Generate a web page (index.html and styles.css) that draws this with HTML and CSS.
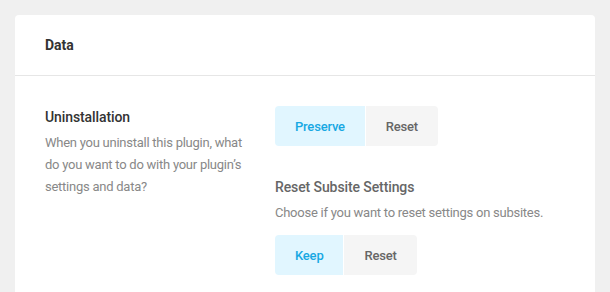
FILE: index.html
```html
<!DOCTYPE html>
<html lang="en">
<head>
<meta charset="utf-8">
<title>Data</title>
<link rel="stylesheet" href="styles.css">
</head>
<body>
<div class="card">
  <div class="card-header">
    <h3 class="card-title">Data</h3>
  </div>
  <div class="card-body">
    <div class="setting-row">
      <div class="setting-label">
        <h4 class="label-title">Uninstallation</h4>
        <p class="label-desc">When you uninstall this plugin, what do you want to do with your plugin’s settings and data?</p>
      </div>
      <div class="setting-field">
        <div class="tabs">
          <span class="tab active">Preserve</span>
          <span class="tab">Reset</span>
        </div>
        <div class="sub-setting">
          <h4 class="sub-title">Reset Subsite Settings</h4>
          <p class="sub-desc">Choose if you want to reset settings on subsites.</p>
          <div class="tabs">
            <span class="tab active">Keep</span>
            <span class="tab">Reset</span>
          </div>
        </div>
      </div>
    </div>
  </div>
</div>
</body>
</html>
```
FILE: styles.css
```css
* { box-sizing: border-box; }
html, body { height: 100%; }
body {
  margin: 0;
  padding: 15px;
  background: #f0f0f0;
  font-family: Roboto, "Liberation Sans", sans-serif;
  color: #333;
}
.card {
  width: 580px;
  min-height: 400px;
  background: #fff;
  border-radius: 4px;
}
.card-header {
  height: 61px;
  padding: 0 30px;
  display: flex;
  align-items: center;
  border-bottom: 1px solid #e6e6e6;
}
.card-title {
  margin: 0;
  font-size: 14px;
  font-weight: 700;
  line-height: 22px;
  color: #333;
  padding-bottom: 1px;
}
.card-body {
  padding: 30px;
}
.setting-row {
  display: flex;
  gap: 30px;
}
.setting-label {
  width: 200px;
  flex: none;
}
.label-title, .sub-title {
  margin: 0;
  font-size: 14px;
  font-weight: 500;
  line-height: 22px;
  letter-spacing: -0.1px;
}
.label-title { color: #333; }
.sub-title { color: #666; }
.label-desc, .sub-desc {
  margin: 4px 0 0;
  font-size: 13px;
  line-height: 22px;
  letter-spacing: -0.25px;
  color: #888;
}
.setting-field {
  flex: 1;
}
.tabs {
  display: inline-flex;
  gap: 1px;
  border-radius: 4px;
  overflow: hidden;
}
.tab {
  height: 40px;
  padding: 0 20px;
  display: flex;
  align-items: center;
  font-size: 13px;
  font-weight: 500;
  letter-spacing: -0.2px;
  color: #666;
  background: #f5f5f5;
}
.tab.active {
  color: #17a8e3;
  background: #e1f6ff;
}
.sub-setting {
  margin-top: 30px;
}
.sub-desc {
  margin-bottom: 11px;
}
```
